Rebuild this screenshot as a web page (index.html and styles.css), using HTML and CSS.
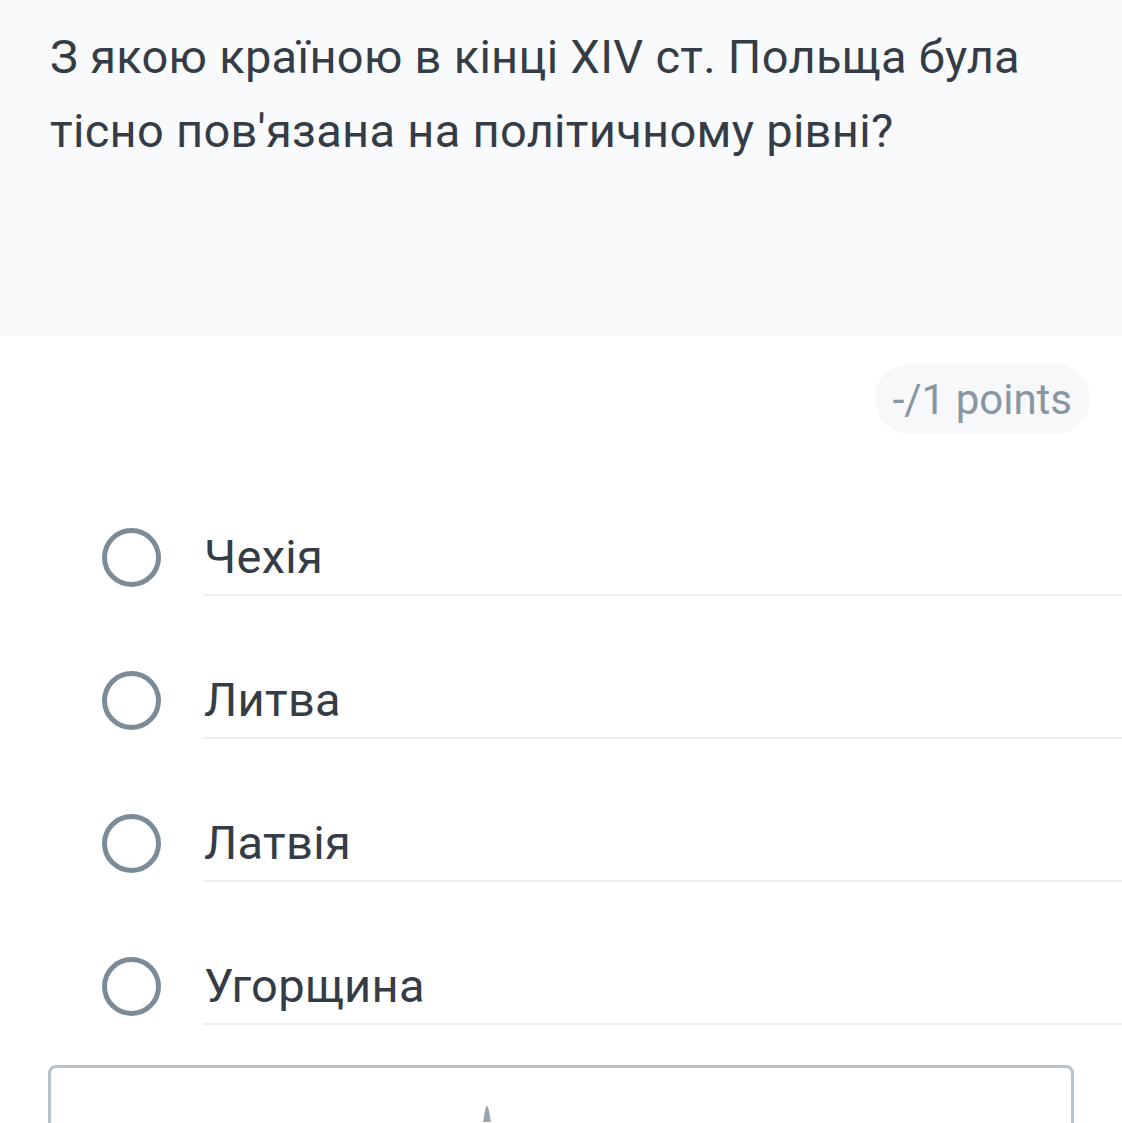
FILE: index.html
```html
<!DOCTYPE html>
<html lang="uk">
<head>
<meta charset="utf-8">
<link rel="stylesheet" href="styles.css">
</head>
<body>
<div class="page">
  <header class="question">
    <p class="question-text">З якою країною в кінці XIV ст. Польща була тісно пов'язана на політичному рівні?</p>
  </header>
  <div class="points-row">
    <span class="points">-/1 points</span>
  </div>
  <ul class="options">
    <li class="option"><span class="radio"></span><span class="label">Чехія</span></li>
    <li class="option"><span class="radio"></span><span class="label">Литва</span></li>
    <li class="option"><span class="radio"></span><span class="label">Латвія</span></li>
    <li class="option"><span class="radio"></span><span class="label">Угорщина</span></li>
  </ul>
  <div class="answer-box">
    <svg class="caret" width="12" height="20" viewBox="0 0 12 20"><path d="M6 4 Q7 4 8 9 L10 20 L2 20 L4 9 Q5 4 6 4 Z" fill="#9aa5b0"/></svg>
  </div>
</div>
</body>
</html>
```

FILE: styles.css
```css
html, body {
  margin: 0;
  padding: 0;
  background: #ffffff;
}
.page {
  width: 1122px;
  height: 1123px;
  overflow: hidden;
  font-family: Roboto, "Noto Sans", sans-serif;
}
.question {
  background: #f9fafc;
  height: 336px;
  box-sizing: border-box;
  padding: 20px 60px 0 50px;
}
.question-text {
  margin: 0;
  font-size: 47px;
  letter-spacing: 0.3px;
  line-height: 74px;
  color: #343d46;
}
.points-row {
  display: flex;
  justify-content: flex-end;
  padding-right: 32px;
  margin-top: 28px;
}
.points {
  display: inline-flex;
  align-items: center;
  height: 70px;
  padding: 0 18px;
  border-radius: 35px;
  background: #f6f8fa;
  color: #8896a2;
  font-size: 42px;
}
.options {
  list-style: none;
  margin: 19px 0 0 0;
  padding: 0;
}
.option {
  display: flex;
  align-items: flex-end;
  height: 143px;
  padding-left: 102px;
}
.radio {
  flex: none;
  width: 59px;
  height: 59px;
  box-sizing: border-box;
  border: 5px solid #7b8b98;
  border-radius: 50%;
  margin-bottom: 9px;
}
.label {
  flex: 1;
  margin-left: 43px;
  padding-bottom: 8px;
  border-bottom: 2px solid #eceef1;
  font-size: 47px;
  letter-spacing: 0.3px;
  line-height: 58px;
  color: #343d46;
}
.answer-box {
  margin: 40px 0 0 48px;
  width: 1026px;
  height: 120px;
  box-sizing: border-box;
  border: 3px solid #b9c1c9;
  border-radius: 8px;
  position: relative;
}
.caret {
  position: absolute;
  left: 430px;
  top: 34px;
}
```
